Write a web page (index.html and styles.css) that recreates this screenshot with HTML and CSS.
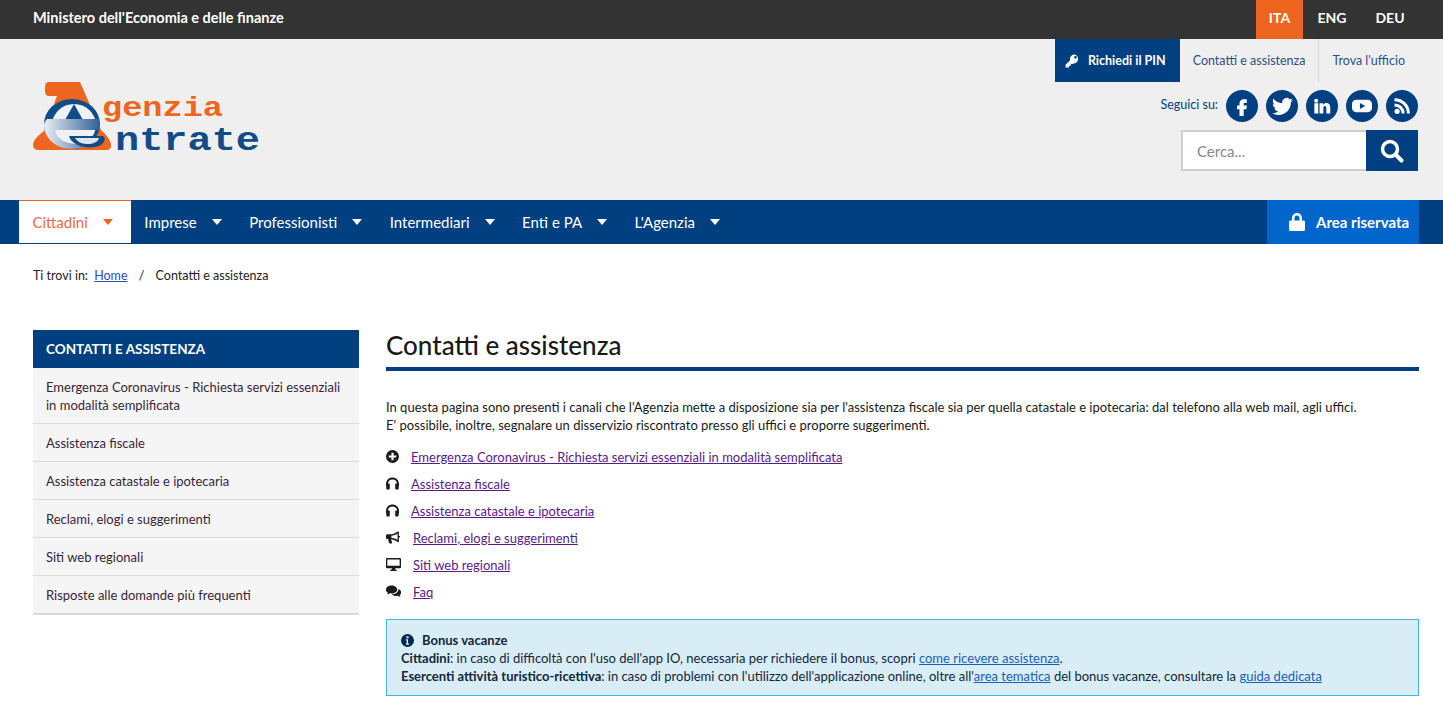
FILE: index.html
```html
<!doctype html>
<html lang="it">

<head>
    <meta charset="utf-8">
    <title>Contatti e assistenza - Agenzia delle Entrate</title>
    <link rel="stylesheet" href="styles.css">
</head>

<body>
    <div class="topbar">
        <a class="topbar-title" href="#">Ministero dell'Economia e delle finanze</a>
        <ul class="langs">
            <li class="lang active"><a href="#">ITA</a></li>
            <li class="lang"><a href="#">ENG</a></li>
            <li class="lang"><a href="#">DEU</a></li>
        </ul>
    </div>

    <header class="header">
        <a class="logo" href="#">
            <svg width="228" height="70" viewBox="0 0 228 70">
                <defs>
                    <linearGradient id="egrad" x1="0" x2="1" y1="0" y2="0">
                        <stop offset="0" stop-color="#e9eef5"/>
                        <stop offset="1" stop-color="#2f6096"/>
                    </linearGradient>
                </defs>
                <path fill="#ee6520" d="M15 0H47L68 48C72 52 79 58 78 65C77 68 74 68 72 68H5C1 68 0 65 0 62C1 57 6 53 11 49L24 14H16C12 14 12 10 12 6C12 2 13 0 15 0Z"/>
                <ellipse cx="39" cy="42" rx="28" ry="25" fill="#0f4d86"/>
                <ellipse cx="41" cy="43" rx="22" ry="21" fill="#eef0f3"/>
                <path fill="#0f4d86" d="M41 22L50 38H32Z"/>
                <path fill="url(#egrad)" d="M14 37H66C67 42 67 46 66 48H22C24 58 33 62 46 62H56C50 66 44 67 38 67C22 67 11 55 11 43C11 41 13 38 14 37Z"/>
                <path fill="#0f4d86" d="M36 54H70C74 56 71 64 62 65C50 67 38 62 36 54Z"/>
                <path fill="#dfe5ee" d="M42 56H66C65 60 60 62 54 62C48 62 44 59 42 56Z"/>
                <text class="logo-top" x="69" y="34" textLength="121" lengthAdjust="spacingAndGlyphs">genzia</text>
                <text class="logo-bottom" x="82" y="68" textLength="145" lengthAdjust="spacingAndGlyphs">ntrate</text>
            </svg>
        </a>
        <div class="header-right">
            <ul class="service">
                <li class="service-pin"><a href="#">
                    <svg class="ico" width="14" height="14" viewBox="0 0 24 24"><path fill="#fff" d="M16 1a7.500 7.500 0 0 0-7.200 9.700L1 18.500V23h6v-3h3v-3h3l.9-.9A7.500 7.500 0 1 0 16 1zm2 7a2.300 2.300 0 1 1 0-4.600A2.300 2.300 0 0 1 18 8z" transform="rotate(0 12 12)"/></svg>
                    Richiedi il PIN</a></li>
                <li class="service-item"><a href="#">Contatti e assistenza</a></li>
                <li class="service-item last"><a href="#">Trova l'ufficio</a></li>
            </ul>
            <div class="social">
                <span class="social-label">Seguici su:</span>
                <a class="social-btn" href="#"><svg width="20" height="20" viewBox="0 0 24 24"><path fill="#fff" d="M14.500 8.500h3.200V4h-3.700c-3 0-5 2-5 5v2.500H6V16h3v8h5v-8h3.200l.8-4.500h-4V9.500c0-.6.400-1 .5-1z"/></svg></a>
                <a class="social-btn" href="#"><svg width="21" height="21" viewBox="0 0 24 24"><path fill="#fff" d="M23.953 4.570a10 10 0 01-2.825.775 4.958 4.958 0 002.163-2.723c-.951.555-2.005.959-3.127 1.184a4.920 4.920 0 00-8.384 4.482C7.690 8.095 4.067 6.130 1.640 3.162a4.822 4.822 0 00-.666 2.475c0 1.710.870 3.213 2.188 4.096a4.904 4.904 0 01-2.228-.616v.060a4.923 4.923 0 003.946 4.827 4.996 4.996 0 01-2.212.085 4.936 4.936 0 004.604 3.417 9.867 9.867 0 01-6.102 2.105c-.390 0-.779-.023-1.170-.067a13.995 13.995 0 007.557 2.209c9.053 0 13.998-7.496 13.998-13.985 0-.210 0-.420-.015-.630A9.935 9.935 0 0024 4.590z"/></svg></a>
                <a class="social-btn" href="#"><svg width="18" height="18" viewBox="0 0 24 24"><path fill="#fff" d="M6.940 5a2.700 2.700 0 1 1-5.400-.002 2.700 2.700 0 0 1 5.400.002zM7 8.480H1.800V22H7V8.480zm6.320 0H8.700V22h5.100v-7c0-3.660 4-4 4 0V22H23v-8.500c0-6.800-7.060-6.600-9.720-3.300l.04-1.720z"/></svg></a>
                <a class="social-btn" href="#"><svg width="20" height="20" viewBox="0 0 24 24"><path fill="#fff" d="M5 4.500h14c2.700 0 5 2.200 5 5v5c0 2.800-2.300 5-5 5H5c-2.700 0-5-2.200-5-5v-5c0-2.800 2.300-5 5-5zM9.500 8.500v7l6.500-3.500z"/></svg></a>
                <a class="social-btn" href="#"><svg width="18" height="18" viewBox="0 0 24 24"><circle cx="5.500" cy="19" r="3.500" fill="#fff"/><path fill="none" stroke="#fff" stroke-width="4" d="M2 10.500c6.500 0 11.500 5 11.500 11.500M2 3.500c10.500 0 18.500 8 18.500 18.500"/></svg></a>
            </div>
            <form class="search">
                <input class="search-input" type="text" placeholder="Cerca...">
                <button class="search-btn" type="button"><svg width="24" height="24" viewBox="0 0 24 24"><circle cx="10" cy="10" r="7.500" fill="none" stroke="#fff" stroke-width="3.500"/><path stroke="#fff" stroke-width="4" stroke-linecap="round" d="M16 16l5.500 5.500"/></svg></button>
            </form>
        </div>
    </header>

    <nav class="nav">
        <ul class="nav-list">
            <li class="nav-item active"><a href="#">Cittadini<i class="caret"></i></a></li>
            <li class="nav-item"><a href="#">Imprese<i class="caret"></i></a></li>
            <li class="nav-item"><a href="#">Professionisti<i class="caret"></i></a></li>
            <li class="nav-item"><a href="#">Intermediari<i class="caret"></i></a></li>
            <li class="nav-item"><a href="#">Enti e PA<i class="caret"></i></a></li>
            <li class="nav-item"><a href="#">L'Agenzia<i class="caret"></i></a></li>
        </ul>
        <a class="nav-area" href="#">
            <svg width="16" height="18" viewBox="0 0 16 18"><path fill="#fff" d="M3 7.500V5a5 5 0 0 1 10 0v2.500h1.500c.8 0 1.500.7 1.500 1.500v7.500c0 .8-.7 1.500-1.500 1.500h-13C.7 18 0 17.300 0 16.500V9c0-.8.700-1.500 1.500-1.500zm2.500 0h5V5a2.500 2.500 0 0 0-5 0z"/></svg>
            Area riservata</a>
    </nav>

    <p class="crumbs">Ti trovi in: <a href="#">Home</a> <span class="crumb-sep">/</span> Contatti e assistenza</p>

    <div class="main">
        <aside class="side">
            <h2 class="side-title">CONTATTI E ASSISTENZA</h2>
            <ul class="side-list">
                <li><a href="#">Emergenza Coronavirus - Richiesta servizi essenziali in modalità semplificata</a></li>
                <li><a href="#">Assistenza fiscale</a></li>
                <li><a href="#">Assistenza catastale e ipotecaria</a></li>
                <li><a href="#">Reclami, elogi e suggerimenti</a></li>
                <li><a href="#">Siti web regionali</a></li>
                <li><a href="#">Risposte alle domande più frequenti</a></li>
            </ul>
        </aside>

        <section class="content">
            <h1 class="title">Contatti e assistenza</h1>
            <p class="intro">In questa pagina sono presenti i canali che l'Agenzia mette a disposizione sia per l'assistenza fiscale sia per quella catastale e ipotecaria: dal telefono alla web mail, agli uffici.<br>
            E' possibile, inoltre, segnalare un disservizio riscontrato presso gli uffici e proporre suggerimenti.</p>
            <ul class="links">
                <li><svg class="link-ico" width="13" height="13" viewBox="0 0 24 24"><path fill="#1a1a1a" d="M12 0a12 12 0 1 0 0 24 12 12 0 0 0 0-24zm7 14h-5v5h-4v-5H5v-4h5V5h4v5h5z"/></svg><a href="#">Emergenza Coronavirus - Richiesta servizi essenziali in modalità semplificata</a></li>
                <li><svg class="link-ico" width="13" height="13" viewBox="0 0 24 24"><path fill="#1a1a1a" d="M12 1C5.500 1 0 6 0 13v3c0 .5.200 1 .6 1.500V21c0 1 1 2 2 2h3c.8 0 1.400-.6 1.400-1.400v-8.200C7 12.600 6.400 12 5.600 12H3.500C3.800 7.500 7.500 4.500 12 4.500s8.200 3 8.500 7.500h-2.100c-.8 0-1.400.6-1.400 1.400v8.200c0 .8.600 1.400 1.400 1.400h3c1 0 2-1 2-2v-3.500c.4-.5.600-1 .6-1.500v-3C24 6 18.500 1 12 1z"/></svg><a href="#">Assistenza fiscale</a></li>
                <li><svg class="link-ico" width="13" height="13" viewBox="0 0 24 24"><path fill="#1a1a1a" d="M12 1C5.500 1 0 6 0 13v3c0 .5.200 1 .6 1.500V21c0 1 1 2 2 2h3c.8 0 1.400-.6 1.400-1.400v-8.200C7 12.600 6.400 12 5.600 12H3.500C3.800 7.500 7.500 4.500 12 4.500s8.200 3 8.500 7.500h-2.100c-.8 0-1.400.6-1.400 1.400v8.200c0 .8.600 1.400 1.400 1.400h3c1 0 2-1 2-2v-3.500c.4-.5.600-1 .6-1.500v-3C24 6 18.500 1 12 1z"/></svg><a href="#">Assistenza catastale e ipotecaria</a></li>
                <li class="wide"><svg class="link-ico" width="15" height="13" viewBox="0 0 28 24"><path fill="#1a1a1a" d="M24 9V2c0-1-1-1.800-2-1.200C17 4.500 12 6 7 6H3C1.300 6 0 7.300 0 9v3c0 1.700 1.300 3 3 3h1l1.500 7c.2.800 1 1.300 1.700 1.300h3c.8 0 1.300-.7 1.100-1.500L9.500 15.100C14 15.500 18 17.500 22 20.500c1 .6 2-.2 2-1.200V12c1.500 0 2.500-.7 2.500-1.500S25.500 9 24 9zm-2.500 7.500C18 14 14 12.700 10 12.300V8.700c4-.4 8-1.700 11.500-4.200z"/></svg><a href="#">Reclami, elogi e suggerimenti</a></li>
                <li class="wide"><svg class="link-ico" width="15" height="13" viewBox="0 0 28 24"><path fill="#1a1a1a" d="M2.500 0h23C27 0 28 1 28 2.500v14c0 1.500-1 2.500-2.500 2.500H17l.6 3H20v2H8v-2h2.400l.6-3H2.500C1 19 0 18 0 16.500v-14C0 1 1 0 2.500 0zM2.500 2.500V14.500h23V2.500z"/></svg><a href="#">Siti web regionali</a></li>
                <li class="wide"><svg class="link-ico" width="15" height="13" viewBox="0 0 28 24"><path fill="#1a1a1a" d="M10.500 1C4.700 1 0 4.400 0 8.500c0 2.300 1.500 4.400 3.800 5.800-.4 1.100-1 2-1.800 2.800 2 0 4-.8 5.400-1.900 1 .2 2 .3 3.100.3 5.800 0 10.500-3.400 10.500-7S16.300 1 10.500 1z"/><path fill="#1a1a1a" d="M22.800 7c.2.500.2 1 .2 1.500 0 5-5.200 8.500-11.500 8.500h-1c1.800 2 5 3.300 8.500 3.300 1 0 2-.1 3-.3 1.200 1 3.300 1.900 5.200 1.900-.8-.8-1.400-1.700-1.800-2.800 1.800-1.300 3-3.200 3-5.100 0-3-2.500-5.600-5.600-6.500z"/></svg><a href="#">Faq</a></li>
            </ul>
            <div class="notice">
                <p class="notice-head"><svg class="notice-ico" width="13" height="13" viewBox="0 0 24 24"><path fill="#002b4d" d="M12 0a12 12 0 1 0 0 24 12 12 0 0 0 0-24zm-2 4h4v4h-4zm5 16H9v-2.500h1.500V12H9V9.500h4v8h2z"/></svg>Bonus vacanze</p>
                <p><b>Cittadini</b>: in caso di difficoltà con l'uso dell'app IO, necessaria per richiedere il bonus, scopri <a href="#">come ricevere assistenza</a>.</p>
                <p><b>Esercenti attività turistico-ricettiva</b>: in caso di problemi con l'utilizzo dell'applicazione online, oltre all'<a href="#">area tematica</a> del bonus vacanze, consultare la <a href="#">guida dedicata</a></p>
            </div>
        </section>
    </div>
</body>

</html>
```

FILE: styles.css
```css
* {
    box-sizing: border-box;
}
html, body {
    margin: 0;
    padding: 0;
}
body {
    background: #fff;
    color: #19191a;
    font-family: "Lato", "Open Sans", sans-serif;
    font-size: 13px;
    overflow-x: hidden;
}
ul {
    list-style: none;
    margin: 0;
    padding: 0;
}
p {
    margin: 0;
}
a {
    color: inherit;
    text-decoration: none;
}

/* top bar */
.topbar {
    display: flex;
    justify-content: space-between;
    height: 39px;
    padding-left: 33px;
    padding-right: 24px;
    background: #333;
    color: #fff;
    font-weight: 700;
}
.topbar-title {
    font-size: 14.5px;
    line-height: 36px;
}
.langs {
    display: flex;
}
.lang a {
    display: block;
    width: 47px;
    font-size: 14px;
    line-height: 36px;
    height: 39px;
    text-align: center;
}
.lang + .lang a {
    width: 58px;
}
.lang.active a {
    background: #ee6520;
}

/* header */
.header {
    display: flex;
    justify-content: space-between;
    height: 161px;
    padding: 0 25px 0 33px;
    background: #efefef;
}
.logo {
    display: block;
    padding-top: 43px;
}
.logo-top {
    fill: #ee6520;
    font-family: "Liberation Mono", monospace;
    font-size: 27px;
    font-weight: 700;
}
.logo-bottom {
    fill: #0f4d86;
    font-family: "Liberation Mono", monospace;
    font-size: 34px;
    font-weight: 700;
}
.header-right {
    display: flex;
    flex-direction: column;
    align-items: flex-end;
}
.service {
    display: flex;
    height: 43px;
    color: #2d4f86;
    font-size: 12.5px;
}
.service a {
    display: flex;
    align-items: center;
    gap: 9px;
    height: 43px;
}
.service-pin {
    background: #004080;
    color: #fff;
    font-weight: 700;
}
.service-pin a {
    padding: 0 14px 0 10px;
}
.service-item {
    padding: 0 13px;
    border-right: 1px solid #d6d6d6;
}
.service-item.last {
    border-right: 0;
}
.social {
    display: flex;
    align-items: center;
    gap: 8px;
    margin-top: 8px;
}
.social-label {
    color: #004080;
    font-size: 12.5px;
    margin-right: 0;
    padding-bottom: 3px;
}
.social-btn {
    display: flex;
    align-items: center;
    justify-content: center;
    width: 32px;
    height: 32px;
    border-radius: 50%;
    background: #004080;
    margin-left: 0;
}
.search {
    display: flex;
    width: 237px;
    height: 41px;
    margin-top: 8px;
}
.search-input {
    flex: 1;
    min-width: 0;
    border: 2px solid #cfcfcf;
    border-right: 0;
    background: #fff;
    padding: 0 14px;
    font-family: inherit;
    font-size: 15px;
}
.search-input::placeholder {
    color: #888;
}
.search-btn {
    display: flex;
    align-items: center;
    justify-content: center;
    width: 52px;
    border: 0;
    padding: 0;
    background: #004080;
}

/* nav */
.nav {
    display: flex;
    justify-content: space-between;
    height: 44px;
    padding: 0 24px 0 19px;
    background: #004080;
    color: #fff;
    font-size: 15px;
}
.nav-list {
    display: flex;
}
.nav-item a {
    display: flex;
    align-items: center;
    height: 44px;
    padding: 0 14px 1px 13.500px;
}
.nav-item.active a {
    height: 43px;
    background: #fff;
    border-top: 1px solid #ee6520;
    color: #ee6a4a;
    padding-right: 18px;
}
.caret {
    width: 0;
    height: 0;
    margin-left: 15px;
    margin-top: 1px;
    border-left: 5px solid transparent;
    border-right: 5px solid transparent;
    border-top: 6px solid #fff;
}
.nav-item.active .caret {
    border-top-color: #ee6520;
}
.nav-area {
    display: flex;
    align-items: center;
    gap: 11px;
    width: 152px;
    padding-left: 22px;
    background: #0066cc;
    font-weight: 700;
}

/* breadcrumb */
.crumbs {
    padding: 24px 33px 0;
    font-size: 12.5px;
    line-height: 16px;
    color: #222;
}
.crumbs a {
    margin-left: 3px;
    color: #2a50b8;
    text-decoration: underline;
}
.crumb-sep {
    margin: 0 8px;
}

/* two columns */
.main {
    display: grid;
    grid-template-columns: 326px 1033px;
    gap: 27px;
    padding: 46px 24px 0 33px;
}

.side-title {
    margin: 0;
    height: 38px;
    padding-left: 13px;
    background: #004080;
    color: #fff;
    font-size: 13.500px;
    font-weight: 700;
    line-height: 38px;
}
.side-list {
    background: #f5f5f5;
    border-bottom: 2px solid #d9d9d9;
    color: #3a1f3a;
}
.side-list li {
    padding: 10px 13px 9px;
    border-bottom: 1px solid #d9d9d9;
    line-height: 18px;
}
.side-list li:last-child {
    border-bottom: 0;
}

.title {
    margin: 0;
    height: 41px;
    border-bottom: 4px solid #004080;
    font-size: 26px;
    font-weight: 500;
    line-height: 30px;
}
.intro {
    margin-top: 27px;
    line-height: 18px;
}
.links {
    margin-top: 9px;
}
.links li {
    display: flex;
    align-items: center;
    height: 27px;
}
.links a {
    color: #5a1a8a;
    text-decoration: underline;
}
.link-ico {
    flex: none;
    margin-right: 12px;
}

.notice {
    margin-top: 14px;
    height: 77px;
    padding: 11px 14px;
    background: #d9edf7;
    border: 1px solid #46b8da;
    color: #12263a;
    line-height: 18px;
}
.notice-head {
    font-weight: 700;
}
.notice-ico {
    vertical-align: -2px;
    margin-right: 8px;
}
.notice a {
    color: #1a5fb4;
    text-decoration: underline;
}
```
